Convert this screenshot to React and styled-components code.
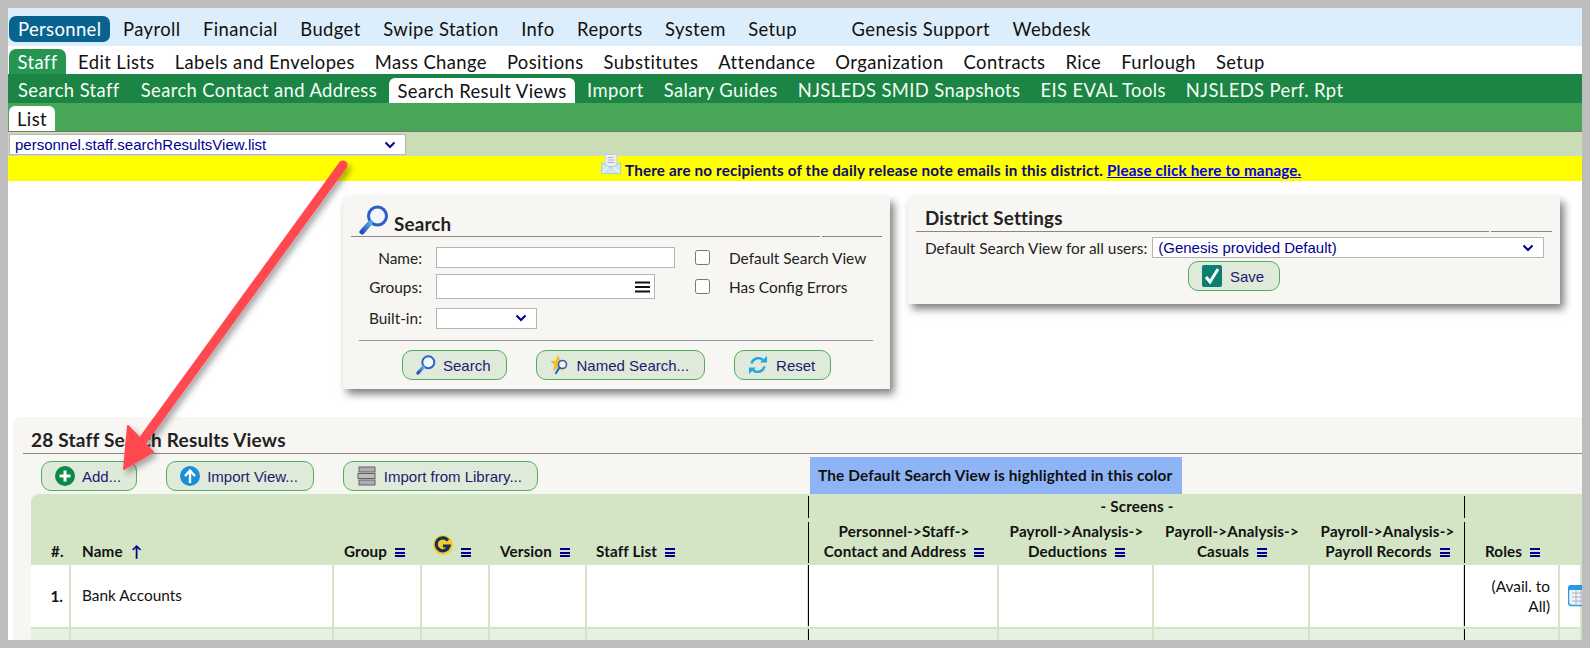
import React from 'react';
import styled, { createGlobalStyle } from 'styled-components';

const Global = createGlobalStyle`
  html, body { margin: 0; padding: 0; height: 648px; overflow: hidden; background: #bdbdbd; }
  * { box-sizing: border-box; }
`;
const NUN = `Lato, "Noto Sans", sans-serif`;
const ARI = `"Liberation Sans", Arial, sans-serif`;
const chevron = `url("data:image/svg+xml,%3Csvg xmlns='http://www.w3.org/2000/svg' width='12' height='8'%3E%3Cpath d='M1.5 1.5 6 6l4.5-4.5' fill='none' stroke='%23000080' stroke-width='2'/%3E%3C/svg%3E")`;

const Frame = styled.div`
  position: relative; width: 1574px; height: 632px; margin: 8px; overflow: hidden; background: #fff;
  font-family: ${NUN}; color: #1a1a1a;
`;
const NavRow = styled.nav`
  display: flex; height: ${p => p.$h}px; background: ${p => p.$bg}; padding-left: 1px; gap: ${p => p.$gap || 0}px;
  align-items: flex-end; font-size: 18.4px; letter-spacing: 0.4px;
`;
const NavLink = styled.a`
  display: flex; align-items: center; justify-content: center; height: ${p => p.$h || 26}px; padding: 0 ${p => p.$pad || 10}px;
  color: ${p => p.$color}; background: ${p => p.$bg || 'transparent'};
  border-radius: ${p => p.$round || '0'};
  margin-left: ${p => p.$ml || 0}px; margin-bottom: ${p => p.$mb || 0}px; white-space: nowrap;
`;
const FilterBar = styled.div`
  height: 25px; background: #cbddb7; border-top: 1px solid #777; padding: 2px 0 0 1px;
`;
const Select = styled.select`
  appearance: none; display: block; width: ${p => p.$w}px; height: ${p => p.$ht || 21}px; border: 1px solid #b5b5b5; background: #fff ${chevron} no-repeat right 9px center;
  color: #000090; font: 15px ${ARI}; padding: 0 0 0 5px; border-radius: 0; margin: 0;
`;
const Notice = styled.div`
  display: flex; height: 25px; background: #ff0; padding: 3px 0 0 593px; align-items: center; font-size: 15.2px; letter-spacing: .17px; font-weight: 700; color: #0b0b6b; gap: 4px;
`;
const NoticeLink = styled.a` color: #0000ee; text-decoration: underline; `;
const MailWrap = styled.span` display: block; margin-top: -8px; height: 20px; width: 20px; margin-bottom: 5px; `;
const Panels = styled.div` display: flex; align-items: flex-start; gap: 18px; padding: 16px 0 0 335px; `;
const Panel = styled.section`
  width: ${p => p.$w}px; height: ${p => p.$h}px; background: #f8f6f3; box-shadow: 4px 5px 8px rgba(0,0,0,.5); padding: 0 8px; flex: none;
`;
const Head = styled.div` display: flex; gap: 2px; height: ${p => p.$h}px; `;
const HeadMain = styled.div`
  display: flex; flex: 1; align-items: flex-end; gap: 5px; border-bottom: 1px solid #888; padding: 0 0 ${p => p.$pb}px ${p => p.$pl}px;
`;
const HeadRest = styled.div` width: ${p => p.$w}px; border-bottom: 1px solid #888; `;
const PanelTitle = styled.h2` margin: 0; font: 700 18.8px/22px ${NUN}; letter-spacing: .2px; color: #222; `;
const FormGrid = styled.div`
  display: grid; grid-template-columns: 71px 258px 1fr; grid-template-rows: 21px 25px 21px; row-gap: 6px; column-gap: 14px; margin-top: 10px; font-size: 15.4px; align-items: center;
  & > :nth-child(7), & > :nth-child(8) { margin-top: 5px; }
`;
const Label = styled.label` text-align: right; color: #222; white-space: nowrap; `;
const TextInput = styled.div` width: ${p => p.$w}px; height: ${p => p.$ht}px; background: #fff; border: 1px solid #b5b5b5; display: flex; align-items: center; justify-content: flex-end; padding-right: 4px; `;
const CheckRow = styled.label` display: flex; align-items: center; gap: 19px; margin-left: -13px; color: #222; white-space: nowrap; `;
const Check = styled.input` width: 15px; height: 15px; margin: 0; flex: none; `;
const Rule = styled.hr` margin: 14px 0 0 8px; width: 514px; border: 0; border-top: 1px solid #999; `;
const BtnRow = styled.div` display: flex; gap: ${p => p.$gap}px; padding-left: ${p => p.$pl}px; margin-top: ${p => p.$mt}px; `;
const Btn = styled.button`
  display: flex; align-items: center; height: 30px; gap: ${p => p.$gap || 7}px; padding: 0 15px 0 13px; background: #e0eada; border: 1px solid #4fae5f; border-radius: 10px; color: #1b1b70; font: 15px ${ARI}; white-space: nowrap; margin: 0;
`;
const SettingRow = styled.div` display: flex; align-items: center; gap: 5px; margin-top: 5px; padding-left: 9px; font-size: 15.4px; color: #222; white-space: nowrap; `;
const Center = styled.div` display: flex; justify-content: center; margin-top: 3px; `;
const Results = styled.section` margin: 28px 0 0 5px; padding-left: 10px; background: #f8f6f3; border-top-left-radius: 8px; height: 300px; `;
const ResultsTitle = styled.h2` margin: 0; height: 37px; font: 700 19px/22px ${NUN}; letter-spacing: .2px; color: #222; border-bottom: 1px solid #888; padding: 12px 0 0 8px; white-space: nowrap; `;
const Toolbar = styled.div` display: flex; height: 40px; padding: 7px 0 0 18px; `;
const ToolBtn = styled(Btn)` margin-right: 29px; `;
const Legend = styled.div` width: 372px; height: 37px; margin: -4px 0 0 243px; background: #8fb4f5; color: #111; font: 700 15.4px/37px ${NUN}; letter-spacing: .15px; padding-left: 8px; white-space: nowrap; flex: none; `;
const Table = styled.table`
  table-layout: fixed; border-collapse: separate; border-spacing: 0; width: 1551px; margin-left: 8px; font-size: 15.4px; color: #111;
`;
const HeadRow = styled.tr` background: #d4e5c5; `;
const Th = styled.th`
  position: relative; height: ${p => p.$h}px; padding: 0 0 4px ${p => p.$pl || 0}px; text-align: ${p => p.$align || 'left'}; vertical-align: bottom; font-weight: 700; font-size: 15.2px; letter-spacing: .15px; line-height: 20px; white-space: nowrap;
  ${p => p.$corner && `border-top-left-radius: 8px;`}
  ${p => p.$bar && `&::after { content: ''; position: absolute; right: 0; top: 2px; bottom: 2px; width: 1px; background: #000; }`}
`;
const Td = styled.td`
  position: relative; height: ${p => p.$h || 64}px; padding: 0; vertical-align: middle; background: ${p => p.$alt ? '#e7f1e0' : '#fff'};
  border-right: 2px solid #d4e5c5; border-bottom: 2px solid #d4e5c5; text-align: ${p => p.$align || 'left'};
  ${p => p.$black && `&::after { content: ''; position: absolute; right: -2px; top: 0; bottom: 1px; width: 1px; background: #000; }`}
`;
const NumCell = styled.span` display: block; font-weight: 700; text-align: right; padding-right: 6px; `;
const NameCell = styled.span` display: block; padding-left: 11px; margin-top: -2px; `;
const RoleCell = styled.span` display: block; line-height: 20px; padding: 0 8px 0 20px; `;
const IconCell = styled.span` display: block; padding-left: 8px; white-space: nowrap; `;
const Sort = styled.span` color: #000080; margin-left: 8px; font-weight: 700; `;
const Bars = styled.span`
  display: inline-block; width: 10px; height: 9px; margin-left: 8px; border-top: 2px solid #000090; border-bottom: 2px solid #000090; position: relative;
  &::after { content: ''; position: absolute; left: 0; right: 0; top: 1.5px; height: 2px; background: #000090; }
`;
const ArrowLayer = styled.svg` position: absolute; left: 0; top: 0; pointer-events: none; `;
const Ico = styled.svg` display: block; flex: none; `;
const InlineIco = styled(Ico)` display: inline-block; vertical-align: 2px; `;

const Glass = ({ s = 20 }) => (
  <Ico width={s} height={s} viewBox="0 0 30 30">
    <defs><linearGradient id="h" x1="0" y1="1" x2="1" y2="0"><stop offset="0" stopColor="#2350b5"/><stop offset="1" stopColor="#5aa6e6"/></linearGradient></defs>
    <circle cx="18.5" cy="11" r="9" fill="#f3f7fb" stroke="#2c5fc5" strokeWidth="3"/>
    <path d="M11 18 3 27" stroke="url(#h)" strokeWidth="5" strokeLinecap="round"/>
  </Ico>
);
const StarGlass = () => (
  <Ico width="20" height="20" viewBox="0 0 20 20">
    <path d="M8 0l2.3 5.6 6 .5-4.6 3.9 1.4 5.9L8 12.8 2.9 16 4.300 10 0 6.100l5.700-.5z" fill="#f0bd2c"/>
    <circle cx="12.500" cy="9.500" r="4" fill="#f5f1dc" stroke="#2c5fc5" strokeWidth="1.600"/>
    <path d="M9.500 12.500 6 18" stroke="#2c5fc5" strokeWidth="2.200" strokeLinecap="round"/>
  </Ico>
);
const Refresh = () => (
  <Ico width="20" height="20" viewBox="0 0 20 20" fill="none">
    <path d="M3.500 8.500A7 7 0 0 1 15 5" stroke="#1ea5e2" strokeWidth="2.400"/>
    <path d="M12 7.500h7V1z" fill="#1ea5e2"/>
    <path d="M16.500 11.500A7 7 0 0 1 5 15" stroke="#1ea5e2" strokeWidth="2.400"/>
    <path d="M8 12.500H1V19z" fill="#1ea5e2"/>
  </Ico>
);
const Plus = () => (
  <Ico width="20" height="20" viewBox="0 0 20 20">
    <circle cx="10" cy="10" r="10" fill="#0a8a46"/>
    <path d="M10 4.500v11M4.500 10h11" stroke="#fff" strokeWidth="3"/>
  </Ico>
);
const Up = () => (
  <Ico width="20" height="20" viewBox="0 0 20 20">
    <circle cx="10" cy="10" r="10" fill="#1b8fd6"/>
    <path d="M10 17V6M5 10l5-5.500 5 5.500" stroke="#fff" strokeWidth="2.400" fill="none"/>
  </Ico>
);
const Books = () => (
  <Ico width="20" height="20" viewBox="0 0 20 20">
    <rect x="2" y="1" width="16" height="5" fill="#a7afbd" stroke="#6d5f58"/>
    <rect x="1" y="7.500" width="17" height="5" fill="#b6bcc8" stroke="#6d5f58"/>
    <rect x="2" y="14" width="16" height="5" fill="#a7afbd" stroke="#6d5f58"/>
  </Ico>
);
const SaveIco = () => (
  <Ico width="20" height="22" viewBox="0 0 20 22">
    <rect width="20" height="22" rx="2" fill="#0b7f70"/>
    <path d="M4 12l4 5 8-13" stroke="#fff" strokeWidth="3" fill="none"/>
  </Ico>
);
const Mail = () => (
  <Ico width="20" height="20" viewBox="0 0 20 20">
    <rect x="4" y="0.500" width="12" height="12" fill="#eef1f4" stroke="#c5ced6"/>
    <path d="M6.500 3.500h6M6.500 6h7M6.500 8.500h7" stroke="#a9b2bb"/>
    <path d="M0.500 8.500 10 14l9.500-5.500v11h-19z" fill="#cfe6f8" stroke="#a9cfe8"/>
    <path d="M1 19l6-6M19 19l-6-6" stroke="#fff"/>
  </Ico>
);
const GLogo = () => (
  <InlineIco width="20" height="20" viewBox="0 0 20 20">
    <circle cx="10" cy="10" r="10" fill="#f4cc2a"/>
    <path d="M15 5.500A6.500 6.500 0 1 0 16 11h-6" fill="none" stroke="#14305f" strokeWidth="3.200"/>
  </InlineIco>
);
const Menu = () => (
  <Ico width="15" height="12" viewBox="0 0 15 12"><path d="M0 1.500h15M0 6h15M0 10.500h15" stroke="#111" strokeWidth="2"/></Ico>
);
const Cal = () => (
  <Ico width="22" height="22" viewBox="0 0 22 22">
    <rect x="0.500" y="0.500" width="21" height="20" rx="3" fill="#eef3f8" stroke="#2a9be0" strokeWidth="1.500"/>
    <rect x="1" y="1" width="20" height="4" fill="#2a9be0"/>
    <path d="M4 8h18M4 12h18M4 16h18M8 5v14M13 5v14" stroke="#a9b4bf"/>
  </Ico>
);

const top1 = ['Payroll', 'Financial', 'Budget', 'Swipe Station', 'Info', 'Reports', 'System', 'Setup'];
const top2 = ['Edit Lists', 'Labels and Envelopes', 'Mass Change', 'Positions', 'Substitutes', 'Attendance', 'Organization', 'Contracts', 'Rice', 'Furlough', 'Setup'];
const top3 = ['Import', 'Salary Guides', 'NJSLEDS SMID Snapshots', 'EIS EVAL Tools', 'NJSLEDS Perf. Rpt'];
const cols = [40, 263, 88, 68, 97, 222, 190, 155, 156, 155, 95, 22];

const Columns = () => <colgroup>{cols.map((w, i) => <col key={i} style={{ width: w }} />)}</colgroup>;

const BodyRow = ({ alt, num, name, role, icon }) => (
  <tr>
    <Td $alt={alt} $h={alt ? 20 : 64}><NumCell>{num}</NumCell></Td>
    <Td $alt={alt}><NameCell>{name}</NameCell></Td>
    <Td $alt={alt}/><Td $alt={alt}/><Td $alt={alt}/>
    <Td $alt={alt} $black/>
    <Td $alt={alt}/><Td $alt={alt}/><Td $alt={alt}/>
    <Td $alt={alt} $black/>
    <Td $alt={alt} $align="right"><RoleCell>{role}</RoleCell></Td>
    <Td $alt={alt}>{icon && <IconCell><Cal/></IconCell>}</Td>
  </tr>
);

export default function App() {
  return (
    <>
      <Global/>
      <Frame>
        <NavRow $h={38} $bg="#dceefb" $gap={2.6}>
          <NavLink $color="#fff" $bg="#08648f" $round="7px" $mb={4} $pad={9}>Personnel</NavLink>
          {top1.map(t => <NavLink key={t} $color="#111" $mb={4}>{t}</NavLink>)}
          <NavLink $color="#111" $ml={32} $mb={4}>Genesis Support</NavLink>
          <NavLink $color="#111" $mb={4}>Webdesk</NavLink>
        </NavRow>
        <NavRow $h={28} $bg="#fff" $gap={-0.5}>
          <NavLink $color="#fff" $bg="#259550" $round="7px 7px 0 0" $pad={8.5} $h={25}>Staff</NavLink>
          {top2.map((t, i) => <NavLink key={t} $color="#111" $h={25} $ml={i === 0 ? 2 : 0}>{t}</NavLink>)}
        </NavRow>
        <NavRow $h={29} $bg="#1c8444" $gap={0}>
          <NavLink $color="#f4fff4" $pad={9}>Search Staff</NavLink>
          <NavLink $color="#f4fff4" $ml={2}>Search Contact and Address</NavLink>
          <NavLink $color="#111" $bg="#fff" $round="6px 6px 0 0" $h={25} $pad={8.5} $ml={2}>Search Result Views</NavLink>
          {top3.map((t, i) => <NavLink key={t} $color="#f4fff4" $ml={i === 0 ? 2 : 0}>{t}</NavLink>)}
        </NavRow>
        <NavRow $h={28} $bg="#48a657">
          <NavLink $color="#111" $bg="#fff" $round="6px 6px 0 0" $h={25} $pad={8}>List</NavLink>
        </NavRow>
        <FilterBar>
          <Select $w={397} $ht={21} defaultValue="a"><option value="a">personnel.staff.searchResultsView.list</option></Select>
        </FilterBar>
        <Notice>
          <MailWrap><Mail/></MailWrap>
          <span>There are no recipients of the daily release note emails in this district. <NoticeLink>Please click here to manage.</NoticeLink></span>
        </Notice>
        <Panels>
          <Panel $w={547} $h={192}>
            <Head $h={40}>
              <HeadMain $pl={8} $pb={1}><Glass s={30}/><PanelTitle>Search</PanelTitle></HeadMain>
              <HeadRest $w={60}/>
            </Head>
            <FormGrid>
              <Label>Name:</Label>
              <TextInput $w={239} $ht={21}/>
              <CheckRow><Check type="checkbox"/>Default Search View</CheckRow>
              <Label>Groups:</Label>
              <TextInput $w={219} $ht={25}><Menu/></TextInput>
              <CheckRow><Check type="checkbox"/>Has Config Errors</CheckRow>
              <Label>Built-in:</Label>
              <Select $w={101} defaultValue=""><option value=""></option></Select>
            </FormGrid>
            <Rule/>
            <BtnRow $gap={29} $pl={51} $mt={9}>
              <Btn><Glass/>Search</Btn>
              <Btn><StarGlass/>Named Search...</Btn>
              <Btn $gap={8}><Refresh/>Reset</Btn>
            </BtnRow>
          </Panel>
          <Panel $w={652} $h={107}>
            <Head $h={35}>
              <HeadMain $pl={9} $pb={2}><PanelTitle>District Settings</PanelTitle></HeadMain>
              <HeadRest $w={61}/>
            </Head>
            <SettingRow>Default Search View for all users:<Select $w={392} defaultValue="a"><option value="a">(Genesis provided Default)</option></Select></SettingRow>
            <Center><Btn $gap={8}><SaveIco/>Save</Btn></Center>
          </Panel>
        </Panels>
        <Results>
          <ResultsTitle>28 Staff Search Results Views</ResultsTitle>
          <Toolbar>
            <ToolBtn><Plus/>Add...</ToolBtn>
            <ToolBtn><Up/>Import View...</ToolBtn>
            <ToolBtn><Books/>Import from Library...</ToolBtn>
            <Legend>The Default Search View is highlighted in this color</Legend>
          </Toolbar>
          <Table>
            <Columns/>
            <thead>
              <HeadRow>
                <Th $h={26} colSpan={5} $corner/>
                <Th $h={26} $bar/>
                <Th $h={26} colSpan={4} $align="center" $bar>- Screens -</Th>
                <Th $h={26} colSpan={2}/>
              </HeadRow>
              <HeadRow>
                <Th $h={45} $pl={20}>#.</Th>
                <Th $h={45} $pl={11}>Name<Sort>↑</Sort></Th>
                <Th $h={45} $pl={10}>Group<Bars/></Th>
                <Th $h={45} $pl={11}><GLogo/><Bars/></Th>
                <Th $h={45} $pl={10}>Version<Bars/></Th>
                <Th $h={45} $pl={9} $bar>Staff List<Bars/></Th>
                <Th $h={45} $align="center">Personnel-&gt;Staff-&gt;<br/>Contact and Address<Bars/></Th>
                <Th $h={45} $align="center">Payroll-&gt;Analysis-&gt;<br/>Deductions<Bars/></Th>
                <Th $h={45} $align="center">Payroll-&gt;Analysis-&gt;<br/>Casuals<Bars/></Th>
                <Th $h={45} $align="center" $bar>Payroll-&gt;Analysis-&gt;<br/>Payroll Records<Bars/></Th>
                <Th $h={45} $align="center">Roles<Bars/></Th>
                <Th $h={45}/>
              </HeadRow>
            </thead>
            <tbody>
              <BodyRow num="1." name="Bank Accounts" role="(Avail. to All)" icon/>
              <BodyRow alt/>
            </tbody>
          </Table>
        </Results>
        <ArrowLayer width="1574" height="632" viewBox="8 8 1574 632">
          <defs><filter id="sh" x="-20%" y="-20%" width="140%" height="140%"><feDropShadow dx="3" dy="4" stdDeviation="3" floodColor="#000" floodOpacity=".35"/></filter></defs>
          <g filter="url(#sh)">
            <path d="M343 165 143 440" stroke="#ff4a4f" strokeWidth="9" strokeLinecap="round" fill="none"/>
            <path d="M124 469 128 426 153 452z" fill="#ff4a4f" stroke="#ff4a4f" strokeWidth="2" strokeLinejoin="round"/>
          </g>
        </ArrowLayer>
      </Frame>
    </>
  );
}
